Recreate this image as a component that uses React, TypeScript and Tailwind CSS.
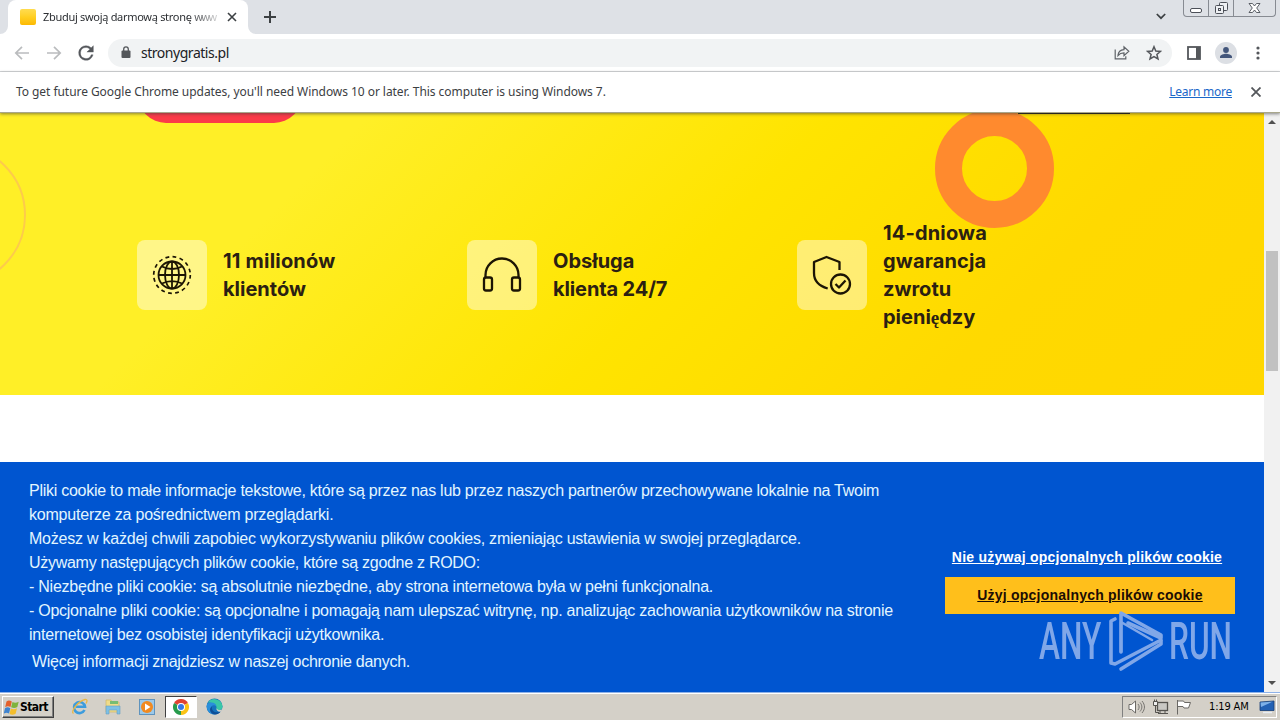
import type { ReactNode } from "react";

const COOKIE_LINES = [
  { text: "Pliki cookie to małe informacje tekstowe, które są przez nas lub przez naszych partnerów przechowywane lokalnie na Twoim", cls: "tracking-[-0.258px]" },
  { text: "komputerze za pośrednictwem przeglądarki.", cls: "tracking-[-0.21px]" },
  { text: "Możesz w każdej chwili zapobiec wykorzystywaniu plików cookies, zmieniając ustawienia w swojej przeglądarce.", cls: "tracking-[-0.23px]" },
  { text: "Używamy następujących plików cookie, które są zgodne z RODO:", cls: "tracking-[-0.28px]" },
  { text: "- Niezbędne pliki cookie: są absolutnie niezbędne, aby strona internetowa była w pełni funkcjonalna.", cls: "tracking-[-0.24px]" },
  { text: "- Opcjonalne pliki cookie: są opcjonalne i pomagają nam ulepszać witrynę, np. analizując zachowania użytkowników na stronie", cls: "tracking-[-0.258px]" },
  { text: "internetowej bez osobistej identyfikacji użytkownika.", cls: "tracking-[-0.23px]" },
];

function TabStrip() {
  return (
    <div className="flex h-[34px] shrink-0 bg-[#dee1e6]">
      <div className="relative ml-2 flex h-[34px] w-[240px] items-center rounded-t-lg bg-white pl-3">
        <span className="h-4 w-4 rounded-[2px] bg-linear-to-b from-[#ffdc4e] via-[#ffcf20] to-[#fcb900]" />
        <span className="ml-[7px] w-[177px] whitespace-nowrap font-['Noto_Sans'] text-[11px] tracking-[-0.3px] text-[#2c2f33] [mask-image:linear-gradient(to_right,black_145px,transparent_182px)]">
          Zbuduj swoją darmową stronę <span className="tracking-[-1.4px]">www</span>
        </span>
        <svg className="ml-[7px]" width="10" height="10" viewBox="0 0 10 10" stroke="#3c4043" strokeWidth="1.6">
          <path d="M1 1l8 8M9 1l-8 8" />
        </svg>
        <svg className="absolute -left-2 bottom-0" width="8" height="8"><path d="M8 0v8H0a8 8 0 0 0 8-8z" fill="#fff" /></svg>
        <svg className="absolute -right-2 bottom-0" width="8" height="8"><path d="M0 0v8h8a8 8 0 0 1-8-8z" fill="#fff" /></svg>
      </div>
      <svg className="mt-[11px] ml-4" width="12" height="12" viewBox="0 0 12 12" stroke="#3c4043" strokeWidth="2">
        <path d="M6 0v12M0 6h12" />
      </svg>
      <svg className="mt-[13px] ml-auto" width="10" height="7" viewBox="0 0 10 7" fill="none" stroke="#3c4043" strokeWidth="1.7">
        <path d="M0.8 1l4.2 4.2L9.2 1" />
      </svg>
      <div className="mr-[4px] ml-[17px] flex h-[17px] w-[93px] rounded-b-[4px] border border-t-0 border-[#878b92] text-[#4c5058]">
        <div className="flex w-[25px] justify-center border-r border-[#878b92]">
          <svg width="12" height="16" fill="#fff" stroke="currentColor"><rect x="0.5" y="8.5" width="11" height="4" rx="1.5" /></svg>
        </div>
        <div className="flex w-[25px] justify-center border-r border-[#878b92]">
          <svg width="13" height="16" fill="#eef0f3" stroke="currentColor">
            <rect x="4.5" y="2.5" width="8" height="8" rx="1" />
            <rect x="0.5" y="5.5" width="8" height="8" rx="1" />
            <rect x="3.5" y="8.5" width="2" height="2" />
          </svg>
        </div>
        <div className="flex flex-1 justify-center">
          <svg width="13" height="16" fill="#fff" stroke="currentColor" strokeWidth="0.9">
            <path d="M1 3.5h3.5l2 2.5 2-2.5H12L8.7 8l3.3 4.5H8.5l-2-2.5-2 2.5H1L4.3 8z" />
          </svg>
        </div>
      </div>
    </div>
  );
}

function Toolbar() {
  return (
    <div className="flex h-[38px] shrink-0 items-center border-b border-[#d5d7da] bg-white">
      <svg className="ml-[14px]" width="16" height="14" viewBox="0 0 16 14" fill="none" stroke="#babcbe" strokeWidth="1.7">
        <path d="M15 7H2M8 0.8L1.8 7 8 13.2" />
      </svg>
      <svg className="ml-4" width="16" height="14" viewBox="0 0 16 14" fill="none" stroke="#babcbe" strokeWidth="1.7">
        <path d="M1 7h13M8 0.8L14.2 7 8 13.2" />
      </svg>
      <svg className="ml-[13px]" width="22" height="22" viewBox="0 0 24 24" fill="#54575b" stroke="#54575b" strokeWidth="0.4">
        <path d="M17.65 6.35A7.96 7.96 0 0 0 12 4a8 8 0 1 0 7.73 10h-2.08A6 6 0 1 1 12 6c1.66 0 3.14.69 4.22 1.78L13 11h7V4z" />
      </svg>
      <div className="ml-[11px] flex h-7 w-[1064px] items-center rounded-full bg-[#f1f3f4] pl-[13px]">
        <svg width="10" height="13" viewBox="0 0 10 13">
          <rect x="0.5" y="4.5" width="9" height="7.5" rx="1" fill="#54575b" />
          <path d="M2.7 5V3.2a2.3 2.3 0 0 1 4.6 0V5" fill="none" stroke="#54575b" strokeWidth="1.3" />
        </svg>
        <span className="ml-[10px] font-['Noto_Sans'] text-[14px] tracking-[-0.47px] text-[#202124]">stronygratis.pl</span>
        <svg className="ml-auto" width="16" height="15" viewBox="0 0 16 15" fill="none" stroke="#5f6368" strokeWidth="1.2">
          <path d="M1.2 4.5v9.3h10.6v-2.6" />
          <path d="M4 10.5c.3-3.8 2.6-5.7 6-5.9V1.8l4.8 4.5-4.8 4.3V7.9c-2.7 0-4.5.8-6 2.6z" />
        </svg>
        <svg className="mr-[10px] ml-4" width="16" height="16" viewBox="0 0 16 16" fill="none" stroke="#54575b" strokeWidth="1.5">
          <path d="M8 1.7l1.8 4.3 4.7.4-3.6 3.1 1.1 4.5L8 11.6 4 14l1.1-4.5-3.6-3.1 4.7-.4z" />
        </svg>
      </div>
      <svg className="ml-[15px]" width="14" height="14" viewBox="0 0 14 14">
        <rect x="1" y="1" width="12" height="12" fill="none" stroke="#54575b" strokeWidth="1.8" />
        <path d="M9 1h4v12H9z" fill="#54575b" />
      </svg>
      <svg className="ml-[14px]" width="22" height="22" viewBox="0 0 22 22">
        <circle cx="11" cy="11" r="11" fill="#dcdfe4" />
        <circle cx="11" cy="8" r="2.9" fill="#43567b" />
        <path d="M5 16v-1.2c0-2 4-3 6-3s6 1 6 3V16z" fill="#43567b" />
      </svg>
      <svg className="ml-[19px]" width="4" height="14" fill="#54575b">
        <circle cx="2" cy="2" r="1.6" /><circle cx="2" cy="7" r="1.6" /><circle cx="2" cy="12" r="1.6" />
      </svg>
    </div>
  );
}

function InfoBar() {
  return (
    <div className="z-10 flex h-[41px] shrink-0 items-center border-b border-[#a9a78c] bg-white font-['Noto_Sans'] text-[12px] shadow-[0_1px_3px_rgba(60,60,60,0.6)]">
      <span className="ml-4 tracking-[-0.055px] whitespace-nowrap text-[#3c4043]">
        To get future Google Chrome updates, you'll need Windows 10 or later. This computer is using Windows 7.
      </span>
      <span className="ml-auto tracking-[-0.25px] text-[#1a67c9] underline">Learn more</span>
      <svg className="mr-[19px] ml-[19px]" width="10" height="10" viewBox="0 0 10 10" stroke="#54575b" strokeWidth="1.8">
        <path d="M0.5 0.5l9 9M9.5 0.5l-9 9" />
      </svg>
    </div>
  );
}

function Feature({ icon, children }: { icon: ReactNode; children: ReactNode }) {
  return (
    <div className="flex w-[330px] items-center">
      <div className="flex h-[70px] w-[70px] items-center justify-center rounded-lg bg-white/45">{icon}</div>
      <p className="ml-4 font-['Inter'] text-[20px] leading-7 font-bold text-[#2b2012]">{children}</p>
    </div>
  );
}

const GlobeIcon = (
  <svg width="40" height="40" viewBox="0 0 40 40" fill="none" stroke="#1c1504" strokeWidth="1.8">
    <circle cx="20" cy="20" r="18.3" strokeDasharray="3.8 3.387" strokeWidth="1.7" />
    <circle cx="20" cy="20" r="13.5" />
    <ellipse cx="20" cy="20" rx="7" ry="13.5" />
    <path d="M20 6.5v27M6.5 20h27M10 11.5c6 3.3 14 3.3 20 0M10 28.5c6-3.3 14-3.3 20 0" />
  </svg>
);

const HeadphonesIcon = (
  <svg width="40" height="36" viewBox="0 0 40 36" fill="none" stroke="#1c1504" strokeWidth="2.3">
    <path d="M3.5 20.5V18a16.5 16.5 0 0 1 33 0v2.5" />
    <rect x="2" y="20.5" width="8" height="13" rx="2" />
    <rect x="30" y="20.5" width="8" height="13" rx="2" />
  </svg>
);

const ShieldIcon = (
  <svg width="40" height="40" viewBox="0 0 40 40" fill="none" stroke="#1c1504" strokeWidth="2.3" strokeLinejoin="round">
    <path d="M27.500 15V7L14.500 2 2 7v11c0 8 5 13 13.700 15.500" />
    <circle cx="28.5" cy="29" r="9.5" />
    <path d="M23.500 29l3.500 3.500 6.500-7" />
  </svg>
);

function Hero() {
  return (
    <section className="relative flex h-[282px] items-center overflow-hidden bg-[linear-gradient(135deg,#ffef27_24%,#ffe400_54%,#ffd900_78%,#ffd700_100%)] pt-[42px] pl-[137px]">
      <div className="absolute -top-[46px] left-[138px] h-[56px] w-[164px] rounded-full bg-[#fb3b48]" />
      <div className="absolute -top-[4px] left-[935px] h-[119px] w-[119px] rounded-full border-[27px] border-[#ff8a2e]" />
      <div className="absolute top-0 left-[1018px] h-px w-[112px] bg-[#1d1a10]" />
      <div className="absolute top-[31px] -left-[116px] h-[142px] w-[142px] rounded-full border-2 border-[#fdcb4b]" />
      <Feature icon={GlobeIcon}><span className="tracking-[0.2px]">11 milionów</span><br />klientów</Feature>
      <Feature icon={HeadphonesIcon}>Obsługa<br /><span className="tracking-[-0.12px]">klienta 24/7</span></Feature>
      <Feature icon={ShieldIcon}>
        <span className="tracking-[0.16px]">14-dniowa<br />gwarancja</span><br />zwrotu<br />pieni<span className="font-['Liberation_Serif'] text-[19px]">ę</span>dzy
      </Feature>
    </section>
  );
}

function Watermark() {
  return (
    <div className="absolute top-[147px] left-[1039px] flex h-[64px] w-[200px] items-center font-['Roboto'] text-[51px] leading-none font-medium text-[#80a7e8]">
      <span className="w-[69px]"><span className="inline-block origin-left scale-x-[0.62]">ANY</span></span>
      <svg className="w-[56px] shrink-0" width="56" height="62" viewBox="0 0 56 62" fill="none" stroke="#80a7e8" strokeWidth="3.6" strokeLinejoin="round" strokeLinecap="round">
        <path d="M7 9l-4 2v42l4 1 46-24" />
        <path d="M13 42V3l40 22v3L20 13" />
        <path d="M13 42V12l31 18" strokeWidth="2.6" />
        <path d="M53 31v3L13 59" />
      </svg>
      <div className="ml-[5px] w-[62px]"><span className="inline-block origin-left scale-x-[0.62]">RUN</span></div>
    </div>
  );
}

function CookieBar() {
  return (
    <section className="relative flex h-[230px] bg-[#0055d0]">
      <div className="w-[945px] pt-[17px] pl-[29px] font-['Liberation_Sans'] text-[16px] leading-6 whitespace-nowrap text-[#e2f5ff]">
        {COOKIE_LINES.map((l) => (
          <div key={l.text}><span className={l.cls}>{l.text}</span></div>
        ))}
        <div className="mt-[3px] ml-[3px]"><span className="tracking-[-0.28px]">Więcej informacji znajdziesz w naszej ochronie danych.</span></div>
      </div>
      <div className="flex w-[290px] flex-col pt-[76px] text-center font-['Liberation_Sans'] text-[14px] font-bold whitespace-nowrap">
        <div className="h-[39px] leading-[38px] text-white"><span className="ml-[-6px] tracking-[0.24px] underline">Nie używaj opcjonalnych plików cookie</span></div>
        <div className="h-[37px] bg-[#ffbf1b] leading-[36px] text-[#1c0d04]"><span className="tracking-[0.22px] underline">Użyj opcjonalnych plików cookie</span></div>
      </div>
      <Watermark />
    </section>
  );
}

function Scrollbar() {
  return (
    <div className="flex w-4 flex-col items-center bg-[#f1f1f1]">
      <svg className="mt-[7px]" width="8" height="4"><path d="M0 4h8L4 0z" fill="#505050" /></svg>
      <div className="mt-[127px] h-[120px] w-3 bg-[#c1c1c1]" />
      <svg className="mt-auto mb-[7px]" width="8" height="4"><path d="M0 0h8L4 4z" fill="#505050" /></svg>
    </div>
  );
}

function ChromeLogo() {
  return (
    <svg width="16" height="16" viewBox="0 0 16 16">
      <path d="M8 8L1.07 4A8 8 0 0 1 14.93 4z" fill="#df4332" />
      <path d="M8 8l6.93-4A8 8 0 0 1 8 16z" fill="#fbc314" />
      <path d="M8 8v8A8 8 0 0 1 1.07 4z" fill="#279b4c" />
      <circle cx="8" cy="8" r="4" fill="#fff" />
      <circle cx="8" cy="8" r="3" fill="#3578e5" />
    </svg>
  );
}

function Taskbar() {
  return (
    <div className="flex h-7 shrink-0 items-center border-t border-[#8fb2e8] bg-[#d4d0c8] shadow-[inset_0_1px_0_#fff]">
      <div className="mt-px ml-[2px] flex h-[22px] w-[52px] items-center border border-t-white border-r-[#404040] border-b-[#404040] border-l-white font-['DejaVu_Sans_Condensed'] text-[12px] font-bold text-black shadow-[inset_-1px_-1px_0_#808080]">
        <svg className="ml-px" width="15" height="15" viewBox="0 0 15 15">
          <path d="M2.500 1.500c2-1.500 3.500-1 5.300 0L6.500 7c-1.800-1-3.500-1-5.300.2z" fill="#e4602b" />
          <path d="M8.500 2c2 1.200 3.800 1 6.200-.2L13.300 7c-2 1.300-4 1.300-6.200.3z" fill="#7fb33c" />
          <path d="M1 8.200c2-1.300 3.500-1 5.300 0L5 13.500c-1.800-1-3.500-1-5.300.3z" fill="#3f83cf" />
          <path d="M6.900 8.500c2 1 3.900.9 6.100-.3l-1.400 5.500c-2 1.300-4 1.300-6.100.3z" fill="#f3bd2c" />
        </svg>
        <span className="ml-px tracking-[-0.55px]">Start</span>
      </div>
      <svg className="ml-[17px]" width="17" height="17" viewBox="0 0 17 17" fill="none">
        <path d="M13.500 12A5.500 5.500 0 1 1 14 8.800H5" stroke="#3d9cdd" strokeWidth="2.6" />
        <path d="M2.500 15.500C-1 14 7 3 14 1.500c3-.5 2 2.500 1 4" stroke="#e9b743" strokeWidth="1.3" />
      </svg>
      <svg className="ml-[17px]" width="16" height="16" viewBox="0 0 16 16">
        <path d="M1 1h5l1 2h7v10H1z" fill="#f0dc8a" stroke="#cfb766" strokeWidth="0.7" />
        <path d="M5 2h8v3H5z" fill="#77bd73" />
        <path d="M1 7h14v8h-3v-4H4v4H1z" fill="#7ec1e6" stroke="#659fc3" strokeWidth="0.6" />
      </svg>
      <svg className="ml-[18px]" width="16" height="16" viewBox="0 0 16 16">
        <rect x="0.5" y="0.5" width="15" height="15" fill="#9cc9e9" stroke="#5f93bd" />
        <circle cx="8" cy="8" r="6" fill="#f18a20" />
        <path d="M6 4.500v7L11.500 8z" fill="#fff" />
      </svg>
      <div className="ml-[10px] flex h-[22px] w-8 items-center justify-center border border-t-[#404040] border-r-white border-b-white border-l-[#404040] bg-white">
        <ChromeLogo />
      </div>
      <svg className="ml-[9px]" width="17" height="17" viewBox="0 0 17 17">
        <circle cx="8.5" cy="8.5" r="8" fill="#1673bd" />
        <path d="M2 4.500a8 8 0 0 1 14.500 4c0 3-2.500 4-5 3.500-1.500-.3-1-1.500-1-3C10 5.500 5 4.500 2 4.500z" fill="#3ac7a7" />
        <path d="M1.200 6C4 3.500 10 4 10.500 8.500 8 6 4.500 7.500 5 11c.3 2 1.500 4 3.500 5.400C3 16.500-.5 11 1.200 6z" fill="#2a8fdb" />
        <path d="M6 8.500c-1 4 3 7.500 8.500 5-2 3-6.500 4-9 1.500s-1.500-5.500.5-6.500z" fill="#0f4f98" />
        <path d="M10.500 10.200c1 2 3.800 2.200 6 1l-1.200 2.300c-3 .8-5-.8-4.800-3.300z" fill="#d4d0c8" />
      </svg>
      <div className="mr-[3px] ml-auto flex h-[22px] w-[155px] items-center border border-t-[#808080] border-r-white border-b-white border-l-[#808080]">
        <svg className="ml-[5px]" width="17" height="16" viewBox="0 0 17 16" fill="none" stroke="#6c6a66">
          <path d="M1 5.500h2.500L7.500 2v12L3.500 10.500H1z" fill="#fff" />
          <path d="M10 5c1.500 2 1.500 4 0 6M12 3.500c2.500 3 2.500 6 0 9M14 2c3.300 4 3.300 8 0 12" strokeWidth="0.9" />
        </svg>
        <svg className="ml-[7px]" width="17" height="16" viewBox="0 0 17 16" fill="#eee" stroke="#55534f">
          <rect x="5.5" y="3.5" width="10" height="8" fill="#c9c8c4" strokeWidth="1.3" />
          <path d="M6 14.500h10M3.500 7v6.500H7M8 12v2M13 12v2" fill="none" />
          <path d="M1.500 2.500h4v4h-4zM2.500 0.500v2M4.500 0.500v2" />
        </svg>
        <svg className="ml-[7px]" width="16" height="16" viewBox="0 0 16 16" fill="#fff" stroke="#6a6864">
          <path d="M1.500 1v14.500M1.500 2h6l1 1.500h6L12.500 9H8L7 7.500H1.500z" />
        </svg>
        <span className="ml-[17px] pt-px font-['DejaVu_Sans_Condensed'] text-[11px] tracking-[-0.15px] whitespace-nowrap text-black">1:19 AM</span>
        <svg className="mr-px ml-auto" width="16" height="14" viewBox="0 0 16 14">
          <path d="M1 2l14-1v9.500H1z" fill="#2361b4" stroke="#173e75" strokeWidth="0.8" />
          <path d="M1.500 2.500l12-.8L2 7z" fill="#7db0e8" />
          <path d="M4 12.500h9" stroke="#e8edf3" strokeWidth="1.5" />
        </svg>
      </div>
    </div>
  );
}

export default function App() {
  return (
    <div className="flex h-[720px] w-[1280px] flex-col overflow-hidden bg-white">
      <TabStrip />
      <Toolbar />
      <InfoBar />
      <div className="flex h-[579px] shrink-0">
        <main className="w-[1264px]">
          <Hero />
          <div className="h-[67px] bg-white" />
          <CookieBar />
        </main>
        <Scrollbar />
      </div>
      <Taskbar />
    </div>
  );
}
